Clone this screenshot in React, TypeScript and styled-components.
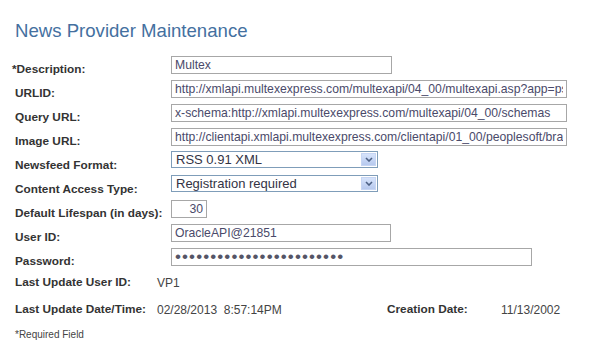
import React from 'react';
import styled, { createGlobalStyle } from 'styled-components';

const GlobalStyle = createGlobalStyle`
  html, body {
    margin: 0;
    padding: 0;
    background: #ffffff;
  }
  body {
    font-family: "Liberation Sans", Arial, sans-serif;
  }
`;

const Page = styled.div`
  width: 589px;
  height: 350px;
  padding: 20px 0 0 12px;
  box-sizing: border-box;
  overflow: hidden;
`;

const Heading = styled.h1`
  margin: 0 0 11px 3px;
  font-size: 18.6px;
  line-height: 22px;
  font-weight: normal;
  color: #44709f;
`;

const Row = styled.div`
  display: flex;
  align-items: flex-start;
  height: 24px;
`;

const Label = styled.label<{ $required?: boolean }>`
  width: 159px;
  padding: 9px 0 0 ${p => (p.$required ? 0 : 3)}px;
  box-sizing: border-box;
  font-size: 11.8px;
  line-height: 14px;
  font-weight: bold;
  color: #333333;
  white-space: nowrap;
  flex-shrink: 0;
`;

const TextInput = styled.input<{ $width: number; $align?: 'left' | 'right' }>`
  width: ${p => p.$width}px;
  height: 18px;
  margin: 3px 0 0 0;
  padding: 0 3px;
  box-sizing: border-box;
  border: 1px solid #a7a7a7;
  background: #ffffff;
  font-family: "Liberation Sans", Arial, sans-serif;
  font-size: 12.2px;
  color: #4a4a6a;
  text-align: ${p => p.$align ?? 'left'};
  outline: none;
`;

const PasswordInput = styled(TextInput)`
  font-size: 17px;
  letter-spacing: 1.1px;
  color: #555566;
`;

const SelectBox = styled.div<{ $width: number }>`
  width: ${p => p.$width}px;
  height: 17px;
  margin-top: 2px;
  box-sizing: border-box;
  border: 1px solid #7f9db9;
  display: flex;
  align-items: stretch;
  background: #ffffff;
`;

const SelectText = styled.div`
  flex: 1;
  padding-left: 4px;
  font-size: 13px;
  line-height: 15px;
  color: #333344;
  white-space: nowrap;
  overflow: hidden;
`;

const SelectArrow = styled.div`
  width: 15px;
  margin: 1px;
  display: flex;
  align-items: center;
  justify-content: center;
  background: linear-gradient(#d6e3fb, #b7c9ee);
  border: 1px solid #c6d5f3;
  box-sizing: border-box;
`;

const InfoSection = styled.div`
  margin-top: 6px;
`;

const InfoRow = styled.div`
  display: flex;
  align-items: flex-start;
  height: 27px;
  padding-left: 3px;
`;

const InfoLabel = styled.div<{ $width: number }>`
  width: ${p => p.$width}px;
  flex-shrink: 0;
  font-size: 11.8px;
  line-height: 14px;
  font-weight: bold;
  color: #333333;
  white-space: nowrap;
`;

const InfoValue = styled.div<{ $width?: number }>`
  width: ${p => (p.$width ? `${p.$width}px` : 'auto')};
  flex-shrink: 0;
  padding-top: 1px;
  font-size: 12px;
  line-height: 14px;
  color: #444444;
  white-space: pre;
`;

const Footnote = styled.div`
  padding-left: 3px;
  font-size: 10px;
  line-height: 12px;
  color: #444444;
`;

const Chevron = () => (
  <svg width="8" height="5" viewBox="0 0 8 5">
    <path d="M1 1 L4 4 L7 1" fill="none" stroke="#4d6185" strokeWidth="1.6" />
  </svg>
);

const Dropdown: React.FC<{ value: string; width: number }> = ({ value, width }) => (
  <SelectBox $width={width}>
    <SelectText>{value}</SelectText>
    <SelectArrow>
      <Chevron />
    </SelectArrow>
  </SelectBox>
);

export default function App() {
  return (
    <Page>
      <GlobalStyle />
      <Heading>News Provider Maintenance</Heading>

      <Row>
        <Label $required>*Description:</Label>
        <TextInput $width={221} readOnly value="Multex" />
      </Row>
      <Row>
        <Label>URLID:</Label>
        <TextInput
          $width={396}
          readOnly
          value="http://xmlapi.multexexpress.com/multexapi/04_00/multexapi.asp?app=ps&sub=news"
        />
      </Row>
      <Row>
        <Label>Query URL:</Label>
        <TextInput
          $width={396}
          readOnly
          value="x-schema:http://xmlapi.multexexpress.com/multexapi/04_00/schemas"
        />
      </Row>
      <Row>
        <Label>Image URL:</Label>
        <TextInput
          $width={396}
          readOnly
          value="http://clientapi.xmlapi.multexexpress.com/clientapi/01_00/peoplesoft/brand.gif"
        />
      </Row>
      <Row>
        <Label>Newsfeed Format:</Label>
        <Dropdown width={207} value="RSS 0.91 XML" />
      </Row>
      <Row>
        <Label>Content Access Type:</Label>
        <Dropdown width={207} value="Registration required" />
      </Row>
      <Row>
        <Label>Default Lifespan (in days):</Label>
        <TextInput $width={36} $align="right" readOnly value="30" />
      </Row>
      <Row>
        <Label>User ID:</Label>
        <TextInput $width={220} readOnly value="OracleAPI@21851" />
      </Row>
      <Row>
        <Label>Password:</Label>
        <PasswordInput $width={361} type="password" readOnly value="abcdefghijklmnopqrstuvwx" />
      </Row>

      <InfoSection>
        <InfoRow>
          <InfoLabel $width={142}>Last Update User ID:</InfoLabel>
          <InfoValue>VP1</InfoValue>
        </InfoRow>
        <InfoRow>
          <InfoLabel $width={142}>Last Update Date/Time:</InfoLabel>
          <InfoValue $width={230}>02/28/2013  8:57:14PM</InfoValue>
          <InfoLabel $width={114}>Creation Date:</InfoLabel>
          <InfoValue>11/13/2002</InfoValue>
        </InfoRow>
      </InfoSection>
      <Footnote>*Required Field</Footnote>
    </Page>
  );
}
